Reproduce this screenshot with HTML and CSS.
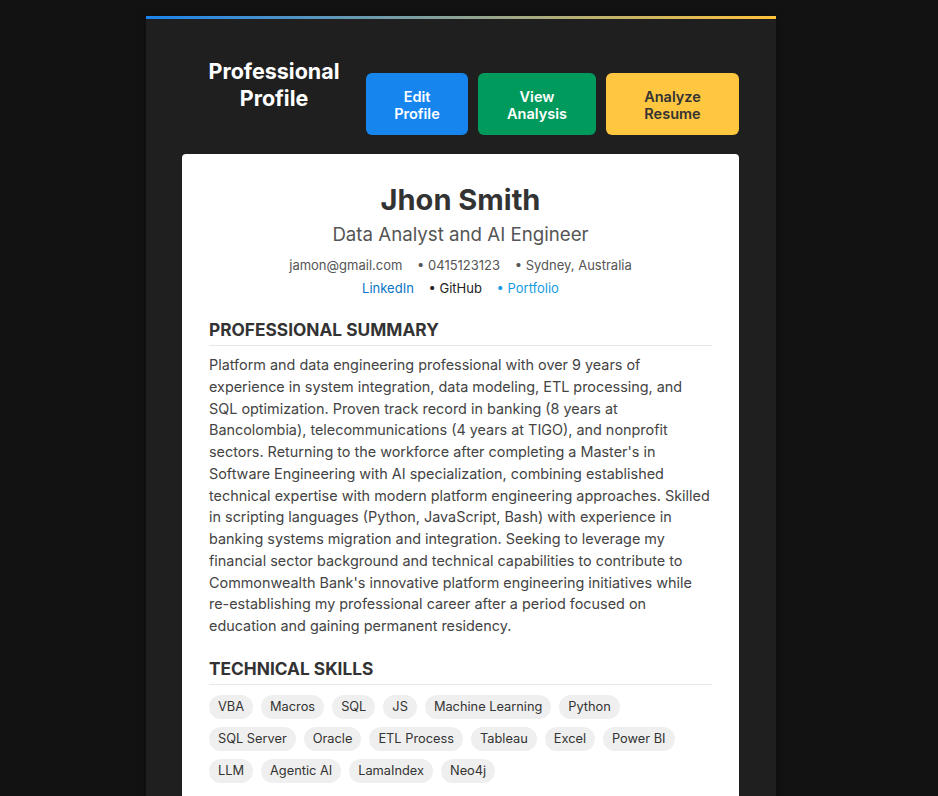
FILE: index.html
```html
<!DOCTYPE html>
<html lang="en">
<head>
<meta charset="utf-8">
<title>Professional Profile</title>
<link rel="stylesheet" href="styles.css">
</head>
<body>
<main class="panel">
  <header class="panel-header">
    <h1 class="panel-title">Professional Profile</h1>
    <div class="actions">
      <button class="btn btn-blue">Edit<br>Profile</button>
      <button class="btn btn-green">View<br>Analysis</button>
      <button class="btn btn-yellow">Analyze<br>Resume</button>
    </div>
  </header>
  <section class="resume">
    <h2 class="name">Jhon Smith</h2>
    <p class="role">Data Analyst and AI Engineer</p>
    <p class="contact">
      <span class="item">jamon@gmail.com</span>
      <span class="item bullet">0415123123</span>
      <span class="item bullet">Sydney, Australia</span>
    </p>
    <p class="contact links">
      <a class="item link-dark-blue" href="#">LinkedIn</a>
      <span class="item bullet link-black">GitHub</span>
      <a class="item bullet link-blue" href="#">Portfolio</a>
    </p>
    <h3 class="section-title">Professional Summary</h3>
    <p class="summary">Platform and data engineering professional with over 9 years of experience in system integration, data modeling, ETL processing, and SQL optimization. Proven track record in banking (8 years at Bancolombia), telecommunications (4 years at TIGO), and nonprofit sectors. Returning to the workforce after completing a Master's in Software Engineering with AI specialization, combining established technical expertise with modern platform engineering approaches. Skilled in scripting languages (Python, JavaScript, Bash) with experience in banking systems migration and integration. Seeking to leverage my financial sector background and technical capabilities to contribute to Commonwealth Bank's innovative platform engineering initiatives while re-establishing my professional career after a period focused on education and gaining permanent residency.</p>
    <h3 class="section-title">Technical Skills</h3>
    <ul class="tags">
      <li>VBA</li><li>Macros</li><li>SQL</li><li>JS</li><li>Machine Learning</li><li>Python</li>
      <li>SQL Server</li><li>Oracle</li><li>ETL Process</li><li>Tableau</li><li>Excel</li><li>Power BI</li>
      <li>LLM</li><li>Agentic AI</li><li>LamaIndex</li><li>Neo4j</li>
    </ul>
  </section>
</main>
</body>
</html>
```

FILE: styles.css
```css
* { box-sizing: border-box; }
html, body { height: 100%; }
body {
  margin: 0;
  background: #121212;
  font-family: Inter, "Noto Sans", sans-serif;
  overflow: hidden;
}
.panel {
  width: 630px;
  margin: 16px 0 0 146px;
  background: #1f1f1f;
  border-radius: 6px 6px 0 0;
  border-top: 3px solid transparent;
  border-image: linear-gradient(90deg, #1a84ee, #ffc23a) 1;
  padding: 38px 37px 40px 36px;
  min-height: 800px;
  box-shadow: 0 0 10px rgba(0,0,0,0.35);
}
.panel-header {
  display: flex;
  align-items: flex-start;
}
.panel-title {
  flex: 1;
  margin: 0;
  text-align: center;
  color: #fff;
  font-size: 21.5px;
  font-weight: 700;
  line-height: 27px;
  padding-top: 1px;
}
.actions {
  display: flex;
  gap: 10px;
  margin-top: 16px;
}
.btn {
  border: 0;
  border-radius: 6px;
  height: 62px;
  font-family: inherit;
  font-size: 14.5px;
  font-weight: 600;
  line-height: 17px;
  color: #fff;
  padding: 2px 16px 0;
}
.btn-blue { background: #1685ee; width: 102px; }
.btn-green { background: #009b5c; width: 118px; }
.btn-yellow { background: #ffc640; color: #333; width: 133px; }
.resume {
  margin-top: 19px;
  background: #fff;
  border-radius: 4px;
  padding: 29px 27px 30px;
  color: #333;
}
.name {
  margin: 0;
  text-align: center;
  font-size: 29px;
  font-weight: 700;
  line-height: 34px;
  color: #333;
}
.role {
  margin: 5px 0 0;
  text-align: center;
  font-size: 18.7px;
  font-weight: 400;
  line-height: 26px;
  color: #555;
}
.contact {
  margin: 9px 0 0;
  text-align: center;
  font-size: 13px;
  line-height: 16px;
  color: #555;
}
.contact.links { margin-top: 7px; }
.item + .item { margin-left: 11px; }
.bullet::before { content: "\2022\00a0"; }
.link-dark-blue { color: #0a74c5; text-decoration: none; }
.link-black { color: #222; }
.link-blue { color: #159be3; text-decoration: none; }
.section-title {
  margin: 24px 0 0;
  padding-bottom: 5px;
  border-bottom: 1px solid #e8e8e8;
  font-size: 17.3px;
  font-weight: 700;
  line-height: 20px;
  text-transform: uppercase;
  color: #333;
}
.summary {
  margin: 8px 0 0;
  font-size: 14.4px;
  line-height: 21.75px;
  color: #444;
}
.summary + .section-title { margin-top: 22px; }
.tags {
  list-style: none;
  margin: 10px 0 0;
  padding: 0;
  display: flex;
  flex-wrap: wrap;
  gap: 8px;
}
.tags li {
  background: #efefef;
  border-radius: 13px;
  padding: 4px 9px;
  font-size: 12.8px;
  line-height: 16px;
  color: #333;
}
```
